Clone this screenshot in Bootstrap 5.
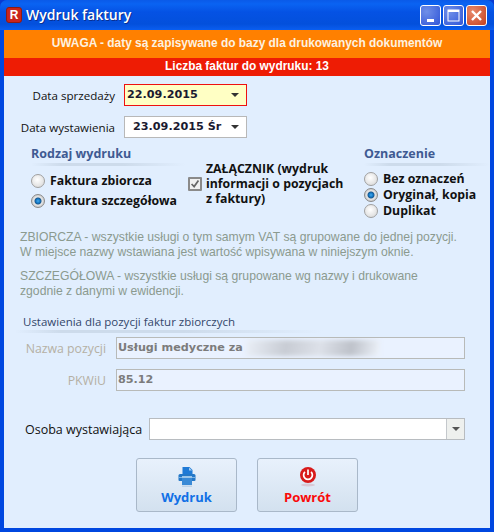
<!DOCTYPE html>
<html lang="pl">
<head>
    <meta charset="UTF-8">
    <meta name="viewport" content="width=device-width, initial-scale=1">
    <title>Wydruk faktury</title>
    <link href="https://cdn.jsdelivr.net/npm/bootstrap@5.3.2/dist/css/bootstrap.min.css" rel="stylesheet">
    <script src="https://cdn.jsdelivr.net/npm/bootstrap@5.3.2/dist/js/bootstrap.bundle.min.js"></script>
    <style>
        html, body { margin: 0; height: 532px; background: #0a3ad0; overflow: hidden; }
        body { font-family: "Open Sans", "DejaVu Sans", sans-serif; font-size: 12px; color: #111; line-height: 15px; }
        .okno { width: 494px; height: 532px; background: #0047e0; border-radius: 7px 7px 0 0; }
        .belka { height: 30px; padding: 0 7px 0 6px; color: #fff; font: 600 14px/1 "Open Sans", sans-serif;
            background: linear-gradient(#0a5ae8 0, #0a63f2 4px, #0552e4 12px, #0350dc 24px, #0a5ef0 30px); border-radius: 7px 7px 0 0; }
        .logo-r { width: 16px; height: 16px; margin-right: 4px; background: #c9241c; border: 1px solid #8e1b14; border-radius: 3px;
            color: #fff; font: bold 12px/14px "Liberation Sans", sans-serif; text-align: center; }
        .tytul { text-shadow: 1px 1px 0 #0a2f90; }
        .przycisk-okna { width: 21px; height: 21px; margin-left: 2px; border: 1px solid #fff; border-radius: 3px;
            background: radial-gradient(circle at 30% 30%, #6f8fe8, #2f55d8); }
        .przycisk-okna.zamknij { background: radial-gradient(circle at 30% 30%, #e88a6c, #c4401f); }
        .srodek { height: 498px; margin: 0 4px 4px; background: #e1eefe; }
        .pas { color: #fff; font: bold 11.9px/1 "Liberation Sans", sans-serif; text-align: center; }
        .pas-uwaga { height: 28px; background: #ff8000; color: #fdf2e0; }
        .pas-liczba { height: 18px; background: #ee1c04; }
        .tresc { padding: 8px 0 0; }
        .wiersz-daty { height: 22px; margin-bottom: 10px; }
        .etykieta { width: 111px; text-align: right; margin-right: 9px; white-space: nowrap; font-size: 11.6px; }
        .data { width: 123px; height: 22px; background: #fff; border: 1px solid #b8b8b8; font: bold 11.2px/20px "DejaVu Sans", sans-serif; padding: 0 7px 0 8px; color: #1a1a30; white-space: nowrap; }
        .data.aktywna { background: #ffffc4; border-color: #ee1010; padding-left: 2px; }
        .strzalka { width: 0; height: 0; border: 4px solid transparent; border-top-color: #333; border-bottom: 0; margin-left: auto; }
        .opcje { margin: -2px 0 0; height: 84px; font: bold 12.3px/16px "Open Sans", sans-serif; white-space: nowrap; }
        .kol-rodzaj { width: 163px; margin-left: 18px; }
        .kol-zal { width: 157px; margin-left: 3px; padding-top: 15px; line-height: 15px; }
        .kol-ozn { margin-left: 10px; width: 135px; }
        .naglowek { color: #3f5a92; font: bold 12.5px/15px "Open Sans", sans-serif; padding: 0 0 0 9px; height: 20px; }
        .naglowek::after { content: ""; display: block; height: 3px; margin-top: 2px; background: linear-gradient(90deg, transparent, #cddbeb 20%, #cddbeb 60%, transparent); }
        .form-check-input.radyjko { width: 14px; height: 14px; margin: 0 5px 0 9px; flex: none; float: none; border: 1px solid #a0a0a0;
            background: radial-gradient(circle at 45% 40%, #fff, #d4d4d4); }
        .form-check-input.radyjko:checked { background: radial-gradient(circle, #4aaaea 0, #0f78c8 2px, #1c5a90 3px, #e8e8e8 4px, #c0c0c0 7px); border-color: #8a8a8a; }
        .form-check-input.ptaszek { width: 14px; height: 14px; margin: 0 4px 0 0; flex: none; float: none; border: 2px solid #8a8a8a; border-radius: 1px; background: #f0f0f0; }
        .form-check-input.ptaszek:checked { background: #f0f0f0 url("data:image/svg+xml,%3Csvg xmlns='http://www.w3.org/2000/svg' viewBox='0 0 14 14'%3E%3Cpath d='M3 7l3 3 5-7' fill='none' stroke='%23666' stroke-width='2'/%3E%3C/svg%3E") center/12px no-repeat; border-color: #8a8a8a; }
        .rzad-radio { height: 20px; }
        .rzad-radio.ciasny { height: 16px; }
        .odstep-a { margin-top: 5px; }
        .opis { margin: 0 0 0 16px; color: #8b9a8f; font: 12.2px/15px "Liberation Sans", sans-serif; white-space: nowrap; }
        .opis + .opis { margin-top: 9px; }
        .ustawienia { margin: 15px 0 0 19px; width: 300px; color: #33466a; font-size: 11.5px; line-height: 15px; }
        .ustawienia::after { content: ""; display: block; height: 3px; margin-top: 1px; margin-left: -8px; background: linear-gradient(90deg, transparent, #cddbeb 15%, #cddbeb 55%, transparent); }
        .wiersz-pola { height: 22px; margin-top: 10px; }
        .wiersz-pola.pierwszy { margin-top: 4px; }
        .etykieta-szara { width: 102px; margin-right: 10px; text-align: right; color: #b5b0a4; font-size: 12.3px; white-space: nowrap; }
        .pole-szare { width: 349px; height: 22px; background: #eaf2ff; border: 1px solid #b8bab8; color: #7c7c7c; font: bold 11.2px/20px "DejaVu Sans", sans-serif; padding-left: 1px; position: relative; overflow: hidden; }
        .rozmazane { position: absolute; left: 129px; top: 2px; width: 134px; height: 16px; background: linear-gradient(100deg, #eaeff7, #c8ccd4 30%, #dde1e9 55%, #bec2ca 78%, #eef3fb); filter: blur(2px); }
        .wiersz-osoba { height: 22px; margin-top: 27px; }
        .etykieta-osoba { margin-left: 21px; margin-right: 7px; width: 117px; white-space: nowrap; color: #111; font-size: 12.5px; }
        .lista { width: 316px; height: 22px; background: #fff; border: 1px solid #b8bcc0; }
        .lista-btn { width: 18px; height: 20px; margin-left: auto; background: #eef0ee; border-left: 1px solid #c4c8cc; }
        .lista-btn .strzalka { margin: 0; border-top-color: #555; }
        .przyciski { margin: 18px 0 0 132px; gap: 20px; }
        .btn.duzy { width: 101px; height: 54px; padding: 8px 0 6px; border: 1px solid #a9b8c9; border-radius: 3px;
            background: linear-gradient(#e8f1fc, #d3e1ef); font: bold 13px/16px "Open Sans", sans-serif; }
        .btn.duzy svg { display: block; margin: 0 auto 2px; }
        .kolor-wydruk { color: #1170e6; }
        .kolor-powrot { color: #fa0a0a; }
    </style>
</head>
<body>
<div class="okno">
    <div class="belka d-flex align-items-center">
        <div class="logo-r">R</div>
        <div class="tytul">Wydruk faktury</div>
        <div class="przycisk-okna ms-auto d-flex align-items-end justify-content-center">
            <svg width="11" height="14" viewBox="0 0 11 14"><rect x="2" y="8" width="7" height="3" fill="#fff"/></svg>
        </div>
        <div class="przycisk-okna d-flex align-items-center justify-content-center">
            <svg width="13" height="13" viewBox="0 0 13 13"><rect x="1" y="1" width="11" height="11" fill="none" stroke="#fff"/><rect x="1" y="1" width="11" height="2" fill="#fff"/></svg>
        </div>
        <div class="przycisk-okna zamknij d-flex align-items-center justify-content-center">
            <svg width="13" height="13" viewBox="0 0 13 13"><path d="M2 2l9 9M11 2l-9 9" stroke="#fff" stroke-width="2.4"/></svg>
        </div>
    </div>
    <div class="srodek">
        <div class="pas pas-uwaga d-flex align-items-center justify-content-center">UWAGA - daty są zapisywane do bazy dla drukowanych dokumentów</div>
        <div class="pas pas-liczba d-flex align-items-center justify-content-center">Liczba faktur do wydruku: 13</div>
        <div class="tresc">
            <div class="wiersz-daty d-flex align-items-center">
                <div class="etykieta">Data sprzedaży</div>
                <div class="data aktywna d-flex align-items-center">22.09.2015<span class="strzalka"></span></div>
            </div>
            <div class="wiersz-daty d-flex align-items-center">
                <div class="etykieta">Data wystawienia</div>
                <div class="data d-flex align-items-center">23.09.2015 Śr<span class="strzalka"></span></div>
            </div>
            <div class="opcje d-flex">
                <div class="kol-rodzaj">
                    <div class="naglowek">Rodzaj wydruku</div>
                    <div class="rzad-radio d-flex align-items-center odstep-a"><input class="form-check-input radyjko" type="radio" name="rodzaj">Faktura zbiorcza</div>
                    <div class="rzad-radio d-flex align-items-center"><input class="form-check-input radyjko" type="radio" name="rodzaj" checked>Faktura szczegółowa</div>
                </div>
                <div class="kol-zal d-flex align-items-center align-self-start">
                    <input class="form-check-input ptaszek" type="checkbox" checked>
                    <div>ZAŁĄCZNIK (wydruk<br>informacji o pozycjach<br>z faktury)</div>
                </div>
                <div class="kol-ozn">
                    <div class="naglowek">Oznaczenie</div>
                    <div class="rzad-radio ciasny d-flex align-items-center odstep-a"><input class="form-check-input radyjko" type="radio" name="ozn">Bez oznaczeń</div>
                    <div class="rzad-radio ciasny d-flex align-items-center"><input class="form-check-input radyjko" type="radio" name="ozn" checked>Oryginał, kopia</div>
                    <div class="rzad-radio ciasny d-flex align-items-center"><input class="form-check-input radyjko" type="radio" name="ozn">Duplikat</div>
                </div>
            </div>
            <p class="opis">ZBIORCZA - wszystkie usługi o tym samym VAT są grupowane do jednej pozycji.<br>W miejsce nazwy wstawiana jest wartość wpisywana w niniejszym oknie.</p>
            <p class="opis">SZCZEGÓŁOWA - wszystkie usługi są grupowane wg nazwy i drukowane<br>zgodnie z danymi w ewidencji.</p>
            <div class="ustawienia">Ustawienia dla pozycji faktur zbiorczych</div>
            <div class="wiersz-pola pierwszy d-flex align-items-center">
                <div class="etykieta-szara">Nazwa pozycji</div>
                <div class="pole-szare">Usługi medyczne za<span class="rozmazane"></span></div>
            </div>
            <div class="wiersz-pola d-flex align-items-center">
                <div class="etykieta-szara">PKWiU</div>
                <div class="pole-szare">85.12</div>
            </div>
            <div class="wiersz-osoba d-flex align-items-center">
                <div class="etykieta-osoba">Osoba wystawiająca</div>
                <div class="lista d-flex">
                    <div class="lista-btn d-flex align-items-center justify-content-center"><span class="strzalka"></span></div>
                </div>
            </div>
            <div class="przyciski d-flex">
                <button type="button" class="btn duzy kolor-wydruk">
                    <svg width="20" height="20" viewBox="0 0 20 20"><path d="M5.5 0h7l3 3v5h-10z" fill="#1f7ad6"/><path d="M12 0.5v3h3z" fill="#a8d0f0"/><path d="M3 7h14q1.500 0 1.500 1.500v4.500q0 1-1 1h-15q-1 0-1-1v-4.500q0-1.500 1.500-1.500z" fill="#2478c8"/><rect x="1.500" y="10" width="17" height="1" fill="#7fb4e4"/><rect x="5" y="9" width="10" height="9" fill="#3a8ad6"/><rect x="5" y="9" width="10" height="2" fill="#9cc6ea"/><rect x="5" y="18.500" width="10" height="1.500" fill="#bcd2e8"/></svg>
                    Wydruk
                </button>
                <button type="button" class="btn duzy kolor-powrot">
                    <svg width="20" height="20" viewBox="0 0 20 20"><circle cx="10" cy="8" r="8" fill="#d81a1a"/><path d="M6.900 4.800a4.400 4.400 0 1 0 6.200 0" fill="none" stroke="#fff" stroke-width="1.700"/><path d="M10 2.500v5.500" stroke="#fff" stroke-width="1.700"/><ellipse cx="10" cy="18" rx="7" ry="1.500" fill="#d8c8d4"/></svg>
                    Powrót
                </button>
            </div>
        </div>
    </div>
</div>
</body>
</html>
